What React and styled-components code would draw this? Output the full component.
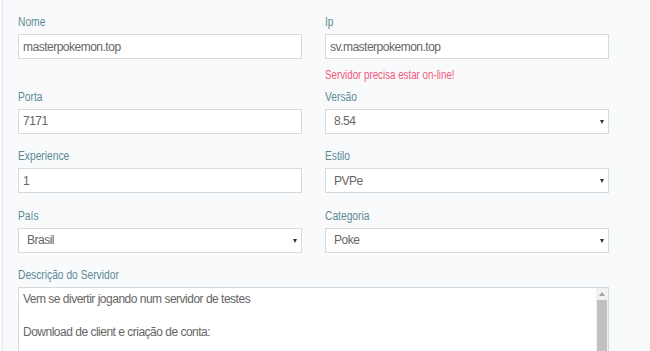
import React from "react";
import styled, { createGlobalStyle } from "styled-components";

const Global = createGlobalStyle`
  html, body { margin: 0; padding: 0; background: #f9fafc; overflow: hidden; }
  body { font-family: "Liberation Sans", Arial, sans-serif; }
`;

const Panel = styled.div`
  margin-left: 2px;
  border-left: 1px solid #e3e7ea;
  padding: 14px 41px 0 15px;
  height: 351px;
  box-sizing: border-box;
`;

const Row = styled.div`
  display: grid;
  grid-template-columns: 1fr 1fr;
  column-gap: 23px;
  margin-bottom: 14.6px;
`;

const Group = styled.div`
  display: flex;
  flex-direction: column;
  align-items: stretch;
`;

const Label = styled.label`
  align-self: flex-start;
  font-size: 12.5px;
  line-height: 16px;
  color: #5b8a95;
  margin-bottom: 4px;
  white-space: nowrap;
  transform: scaleX(0.82);
  transform-origin: left center;
`;

const fieldText = `
  font-family: "Liberation Sans", Arial, sans-serif;
  font-size: 12px;
  letter-spacing: -0.5px;
  color: #666;
`;

const Input = styled.input`
  box-sizing: border-box;
  height: 25px;
  width: 100%;
  border: 1px solid #d7dadd;
  background: #fff;
  padding: 0 4px;
  ${fieldText}
  outline: none;
`;

const SelectWrap = styled.div`
  position: relative;
  height: 25px;
  &::after {
    content: "";
    position: absolute;
    right: 5px;
    top: 11px;
    border-left: 2.5px solid transparent;
    border-right: 2.5px solid transparent;
    border-top: 4px solid #333;
  }
`;

const Select = styled.select`
  appearance: none;
  box-sizing: border-box;
  height: 25px;
  width: 100%;
  border: 1px solid #d7dadd;
  border-radius: 0;
  background: #fff;
  padding: 0 8px;
  ${fieldText}
  outline: none;
`;

const Error = styled.div`
  align-self: flex-start;
  font-size: 12.5px;
  line-height: 15px;
  color: #f0587a;
  margin-top: 9px;
  margin-bottom: -9px;
  transform: scaleX(0.78);
  transform-origin: left center;
  white-space: nowrap;
`;

const AreaWrap = styled.div`
  position: relative;
  height: 120px;
`;

const TextArea = styled.textarea`
  box-sizing: border-box;
  width: 100%;
  height: 100%;
  border: 1px solid #d7dadd;
  background: #fff;
  padding: 3px 16px 0 4px;
  ${fieldText}
  line-height: 16.5px;
  resize: none;
  overflow: hidden;
  outline: none;
`;

const Scrollbar = styled.div`
  position: absolute;
  top: 1px;
  right: 1px;
  bottom: 1px;
  width: 12px;
  background: #f1f1f1;
  display: flex;
  flex-direction: column;
`;

const ArrowUp = styled.div`
  height: 12px;
  display: flex;
  align-items: center;
  justify-content: center;
  &::before {
    content: "";
    border-left: 3px solid transparent;
    border-right: 3px solid transparent;
    border-bottom: 4px solid #a3a3a3;
  }
`;

const Thumb = styled.div`
  flex: 1;
  margin: 0 1px;
  background: #c1c1c1;
`;

const Field = ({ label, children, error }) => (
  <Group>
    <Label>{label}</Label>
    {children}
    {error && <Error>{error}</Error>}
  </Group>
);

const Dropdown = ({ value, options }) => (
  <SelectWrap>
    <Select defaultValue={value}>
      {options.map((o) => (
        <option key={o}>{o}</option>
      ))}
    </Select>
  </SelectWrap>
);

const description =
  "Vem se divertir jogando num servidor de testes\n\nDownload de client e criação de conta:\n\nhttp://masterpokemon.top\n\nVenha jogar conosco!\n\nAtt, equipe.";

export default function App() {
  return (
    <>
      <Global />
      <Panel>
        <Row>
          <Field label="Nome">
            <Input defaultValue="masterpokemon.top" />
          </Field>
          <Field label="Ip" error="Servidor precisa estar on-line!">
            <Input defaultValue="sv.masterpokemon.top" />
          </Field>
        </Row>
        <Row>
          <Field label="Porta">
            <Input defaultValue="7171" />
          </Field>
          <Field label="Versão">
            <Dropdown value="8.54" options={["8.54", "8.60", "10.98"]} />
          </Field>
        </Row>
        <Row>
          <Field label="Experience">
            <Input defaultValue="1" />
          </Field>
          <Field label="Estilo">
            <Dropdown value="PVPe" options={["PVP", "PVPe", "Non-PVP"]} />
          </Field>
        </Row>
        <Row>
          <Field label="País">
            <Dropdown value="Brasil" options={["Brasil", "Portugal"]} />
          </Field>
          <Field label="Categoria">
            <Dropdown value="Poke" options={["Poke", "Tibia"]} />
          </Field>
        </Row>
        <Group>
          <Label>Descrição do Servidor</Label>
          <AreaWrap>
            <TextArea defaultValue={description} />
            <Scrollbar>
              <ArrowUp />
              <Thumb />
            </Scrollbar>
          </AreaWrap>
        </Group>
      </Panel>
    </>
  );
}
